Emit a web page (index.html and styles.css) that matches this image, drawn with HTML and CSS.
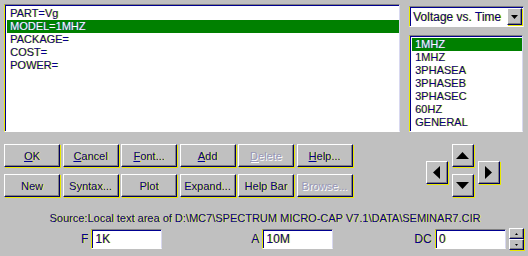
FILE: index.html
```html
<!DOCTYPE html>
<html lang="en">
  <head>
    <meta charset="UTF-8" />
    <title>Model Editor</title>
    <link rel="stylesheet" href="styles.css">
  </head>
  <body>
    <div class="dialog">
      <div class="top">
        <div class="editor sunken">
          <div class="line">PART=Vg</div>
          <div class="line selected">MODEL=1MHZ</div>
          <div class="line">PACKAGE=</div>
          <div class="line">COST=</div>
          <div class="line">POWER=</div>
        </div>
        <div class="side">
          <div class="combo sunken">
            <span class="combo-text">Voltage vs. Time</span>
            <span class="combo-btn raised">
              <svg width="7" height="4" viewBox="0 0 7 4"><path d="M0 0h7L3.5 4z" fill="#000"/></svg>
            </span>
          </div>
          <div class="list sunken">
            <div class="line selected">1MHZ</div>
            <div class="line">1MHZ</div>
            <div class="line">3PHASEA</div>
            <div class="line">3PHASEB</div>
            <div class="line">3PHASEC</div>
            <div class="line">60HZ</div>
            <div class="line">GENERAL</div>
          </div>
        </div>
      </div>

      <div class="controls">
        <div class="buttons">
          <button class="btn raised"><u>O</u>K</button>
          <button class="btn raised"><u>C</u>ancel</button>
          <button class="btn raised"><u>F</u>ont...</button>
          <button class="btn raised"><u>A</u>dd</button>
          <button class="btn raised disabled"><u>D</u>elete</button>
          <button class="btn raised"><u>H</u>elp...</button>
          <button class="btn raised">New</button>
          <button class="btn raised">Syntax...</button>
          <button class="btn raised">Plot</button>
          <button class="btn raised">Expand...</button>
          <button class="btn raised">Help Bar</button>
          <button class="btn raised disabled">Browse...</button>
        </div>
        <div class="pad">
          <button class="arrow raised">
            <svg width="7" height="13" viewBox="0 0 7 13"><path d="M7 0v13L0 6.5z" fill="#000"/></svg>
          </button>
          <div class="pad-mid">
            <button class="arrow raised">
              <svg width="13" height="7" viewBox="0 0 13 7"><path d="M0 7h13L6.5 0z" fill="#000"/></svg>
            </button>
            <button class="arrow raised">
              <svg width="13" height="7" viewBox="0 0 13 7"><path d="M0 0h13L6.5 7z" fill="#000"/></svg>
            </button>
          </div>
          <button class="arrow raised">
            <svg width="7" height="13" viewBox="0 0 7 13"><path d="M0 0v13L7 6.5z" fill="#000"/></svg>
          </button>
        </div>
      </div>

      <div class="source">Source:Local text area of D:\MC7\SPECTRUM MICRO-CAP V7.1\DATA\SEMINAR7.CIR</div>

      <div class="params">
        <label class="param param-f">F <span class="field sunken">1K</span></label>
        <label class="param param-a">A <span class="field sunken">10M</span></label>
        <label class="param param-dc">DC <span class="field sunken">0</span></label>
        <div class="spin">
          <span class="spin-btn raised"><svg width="3" height="2" viewBox="0 0 3 2"><path d="M0 2h3L1.5 0z" fill="#000"/></svg></span>
          <span class="spin-btn raised"><svg width="3" height="2" viewBox="0 0 3 2"><path d="M0 0h3L1.5 2z" fill="#000"/></svg></span>
        </div>
      </div>
    </div>
  </body>
</html>
```

FILE: styles.css
```css
body {
  margin: 0;
  background-color: #c0c0c0;
  font-family: "Liberation Sans", Arial, sans-serif;
  font-size: 11px;
  color: #000090;
}

.dialog {
  width: 528px;
  height: 256px;
  overflow: hidden;
}

/* blue text with the yellow fringe of the capture */
.line,
.btn,
.source,
.param,
.combo-text {
  text-shadow: 1px 0 0 #e8e800;
}

/* Win95-style bevels */
.sunken {
  background-color: #fff;
  border-top: 1px solid #808080;
  border-left: 1px solid #e8e800;
  border-right: 1px solid #d8d8f0;
  border-bottom: 1px solid #fff;
  box-shadow: inset 1px 1px 0 #000090;
}

.raised {
  background-color: #c0c0c0;
  border-top: 1px solid #fff;
  border-left: 1px solid #fff;
  border-right: 1px solid #000060;
  border-bottom: 1px solid #000060;
  box-shadow: inset -1px -1px 0 #808080, 1px 1px 0 #e8e800;
}

/* top area */
.top {
  display: flex;
  padding: 4px 0 0 4px;
}

.editor {
  width: 392px;
  height: 124px;
  padding: 2px 0 0 2px;
  box-sizing: content-box;
}

.line {
  height: 13px;
  line-height: 13px;
  padding-left: 3px;
  white-space: nowrap;
}

.line.selected {
  background-color: #008000;
  color: #fff;
  text-shadow: 1px 0 0 #3050c0;
}

.side {
  margin-left: 9px;
  display: flex;
  flex-direction: column;
}

.combo {
  margin-top: 2px;
  width: 113px;
  height: 19px;
  display: flex;
  align-items: center;
  justify-content: space-between;
}

.combo-text {
  padding-left: 3px;
  font-size: 12px;
}

.combo-btn {
  width: 13px;
  height: 15px;
  margin-right: 1px;
  display: flex;
  align-items: center;
  justify-content: center;
}

.list {
  margin-top: 8px;
  width: 110px;
  height: 93px;
  padding: 2px 0 0 2px;
}

/* buttons */
.controls {
  display: flex;
  padding: 12px 0 0 4px;
}

.buttons {
  display: grid;
  grid-template-columns: repeat(6, 56px);
  column-gap: 2.5px;
  row-gap: 7px;
}

.btn {
  height: 23px;
  padding: 0;
  margin: 0;
  font-family: inherit;
  font-size: 11px;
  color: #000090;
  box-sizing: border-box;
}

.btn.disabled {
  color: #9898b8;
  text-shadow: 1px 1px 0 #fff;
}

.pad {
  display: flex;
  align-items: center;
  gap: 4px;
  margin-left: 73px;
}

.pad > .arrow {
  margin-top: 4px;
}

.pad-mid {
  display: flex;
  flex-direction: column;
  gap: 7px;
}

.arrow {
  width: 22px;
  height: 23px;
  padding: 0;
  display: flex;
  align-items: center;
  justify-content: center;
  box-sizing: border-box;
}

/* source line */
.source {
  margin-top: 14px;
  text-align: center;
  padding-left: 2px;
  font-size: 11px;
  line-height: 14px;
}

/* parameter fields */
.params {
  display: flex;
  align-items: center;
  margin-top: 3px;
  font-size: 12px;
}

.param {
  display: flex;
  align-items: center;
  gap: 3px;
}

.param-f {
  margin-left: 81px;
}

.param-a {
  margin-left: 89px;
}

.param-dc {
  margin-left: 81px;
}

.field {
  width: 66px;
  height: 18px;
  line-height: 18px;
  padding-left: 3px;
}

.spin {
  display: flex;
  flex-direction: column;
  margin-left: 3px;
}

.spin-btn {
  width: 13px;
  height: 9px;
  display: flex;
  align-items: center;
  justify-content: center;
}
```
